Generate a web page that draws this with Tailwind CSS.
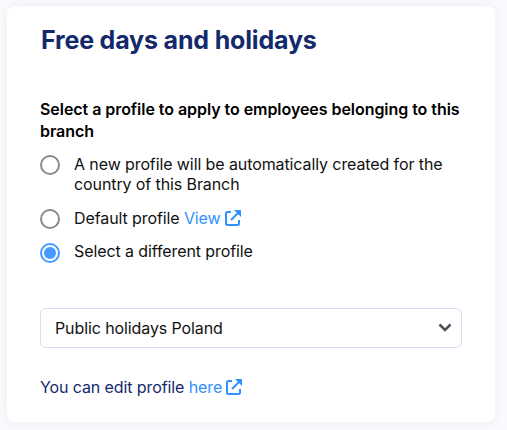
<!DOCTYPE html>
<html lang="en">
<head>
  <meta charset="UTF-8">
  <meta name="viewport" content="width=device-width, initial-scale=1.0">
  <title>Free days and holidays</title>
  <script src="https://cdn.jsdelivr.net/npm/@tailwindcss/browser@4"></script>
</head>
<body class="h-screen overflow-hidden bg-[#f9fafd] pt-[6px] pl-[7px] font-['Inter',sans-serif] text-base tracking-[-0.1px] text-[#111111]">

  <!-- Settings card -->
  <div class="w-[488px] h-[416px] bg-white rounded-lg shadow-[0_0_12px_rgba(30,50,110,0.06)]">
    <div class="h-[69px] pl-[34px] pt-4">
      <h2 class="text-[25px] leading-9 font-bold tracking-[-0.17px] text-[#14296b] whitespace-nowrap">Free days and holidays</h2>
    </div>

    <div class="px-[33px] pt-[23px]">
      <p class="w-[424px] text-base leading-[22px] font-semibold tracking-[-0.05px] text-black">Select a profile to apply to employees belonging to this branch</p>

      <!-- Profile options -->
      <label class="mt-3 flex gap-[14px] leading-5">
        <span class="mt-px size-5 shrink-0 rounded-full border-2 border-[#8a8a8a]"></span>
        <span class="w-[380px]">A new profile will be automatically created for the country of this Branch</span>
      </label>
      <label class="mt-[14px] flex h-5 gap-[14px] leading-5">
        <span class="mt-px size-5 shrink-0 rounded-full border-2 border-[#8a8a8a]"></span>
        <span class="flex items-center">Default profile&nbsp;<a class="text-[#2f90ff]">View</a>
          <svg class="ml-1 size-4" viewBox="0 0 16 16" fill="none" stroke="#2f90ff" stroke-width="2"><path d="M6 2H2.500Q1 2 1 3.500V13.500Q1 15 2.500 15H12.500Q14 15 14 13.500V10M6 10L14 2"/><path d="M9 0H16V7Z" fill="#2f90ff" stroke="none"/></svg>
        </span>
      </label>
      <label class="mt-[13px] flex h-5 gap-[14px] leading-5">
        <span class="mt-[2px] flex size-5 shrink-0 items-center justify-center rounded-full border-2 border-[#439bff]"><span class="size-3 rounded-full bg-[#439bff]"></span></span>
        <span>Select a different profile</span>
      </label>

      <!-- Profile select -->
      <div class="mt-[47px] flex h-10 w-[422px] items-center justify-between rounded-md border border-[#d5def5] pb-px pl-[14px] pr-[9px]">
        <span>Public holidays Poland</span>
        <svg class="h-[9px] w-[14px]" viewBox="0 0 14 9" fill="none" stroke="#4a535c" stroke-width="2.500"><path d="M1.500 1.500L7 7L12.500 1.500"/></svg>
      </div>

      <p class="mt-[29px] flex items-center leading-5 text-[#14296b]">You can edit profile&nbsp;<a class="text-[#2f90ff]">here</a>
        <svg class="ml-1 size-4" viewBox="0 0 16 16" fill="none" stroke="#2f90ff" stroke-width="2"><path d="M6 2H2.500Q1 2 1 3.500V13.500Q1 15 2.500 15H12.500Q14 15 14 13.500V10M6 10L14 2"/><path d="M9 0H16V7Z" fill="#2f90ff" stroke="none"/></svg>
      </p>
    </div>
  </div>

</body>
</html>
